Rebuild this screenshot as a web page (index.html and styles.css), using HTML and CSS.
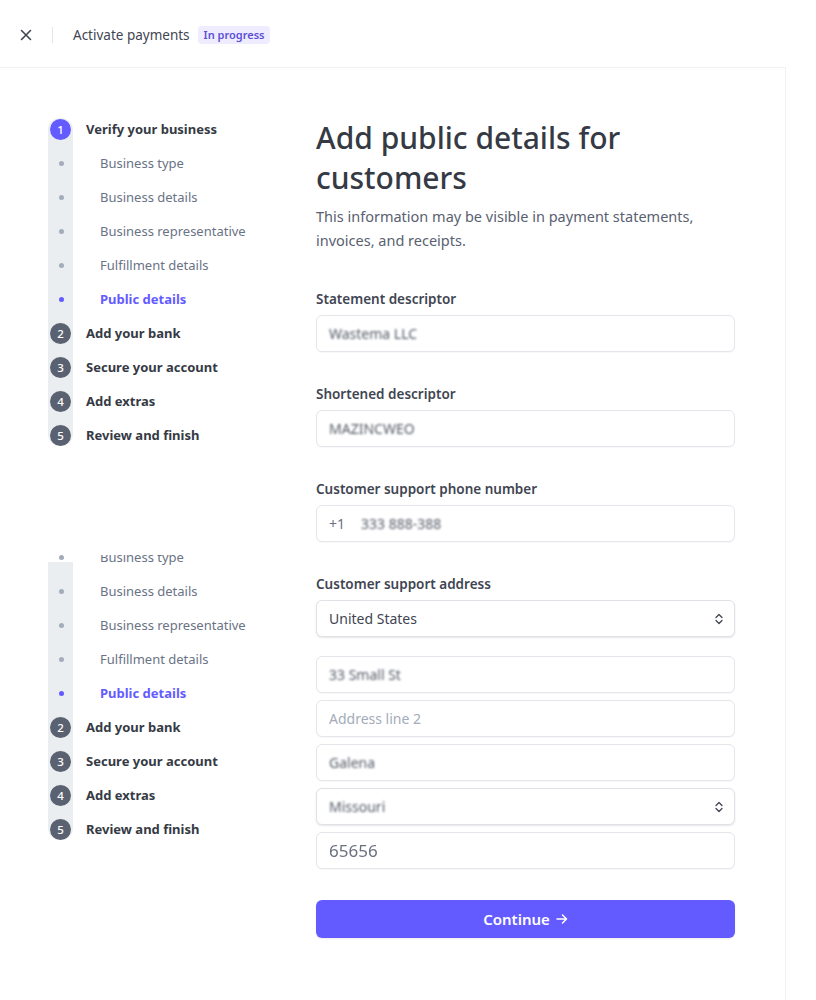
FILE: index.html
```html
<!DOCTYPE html>
<html lang="en">
<head>
<meta charset="utf-8">
<title>Activate payments</title>
<link rel="stylesheet" href="styles.css">
</head>
<body>
<header class="topbar">
  <button class="close" aria-label="Close">
    <svg width="12" height="12" viewBox="0 0 12 12"><path d="M1.5 1.5l9 9M10.5 1.5l-9 9" stroke="#414552" stroke-width="1.6" stroke-linecap="round"/></svg>
  </button>
  <span class="divider"></span>
  <span class="title">Activate payments</span>
  <span class="badge">In progress</span>
</header>
<div class="frame">
  <aside class="sidebar">
    <ol class="steps">
      <li class="step active"><span class="num">1</span><span class="label">Verify your business</span></li>
      <li class="sub"><span class="dot"></span><span class="label">Business type</span></li>
      <li class="sub"><span class="dot"></span><span class="label">Business details</span></li>
      <li class="sub"><span class="dot"></span><span class="label">Business representative</span></li>
      <li class="sub"><span class="dot"></span><span class="label">Fulfillment details</span></li>
      <li class="sub current"><span class="dot"></span><span class="label">Public details</span></li>
      <li class="step"><span class="num">2</span><span class="label">Add your bank</span></li>
      <li class="step"><span class="num">3</span><span class="label">Secure your account</span></li>
      <li class="step"><span class="num">4</span><span class="label">Add extras</span></li>
      <li class="step"><span class="num">5</span><span class="label">Review and finish</span></li>
    </ol>
    <div class="ghost">
      <ol class="steps steps-copy">
        <li class="sub"><span class="dot"></span><span class="label">Business type</span></li>
        <li class="sub"><span class="dot"></span><span class="label">Business details</span></li>
        <li class="sub"><span class="dot"></span><span class="label">Business representative</span></li>
        <li class="sub"><span class="dot"></span><span class="label">Fulfillment details</span></li>
        <li class="sub current"><span class="dot"></span><span class="label">Public details</span></li>
        <li class="step"><span class="num">2</span><span class="label">Add your bank</span></li>
        <li class="step"><span class="num">3</span><span class="label">Secure your account</span></li>
        <li class="step"><span class="num">4</span><span class="label">Add extras</span></li>
        <li class="step"><span class="num">5</span><span class="label">Review and finish</span></li>
      </ol>
    </div>
  </aside>
  <main class="main">
    <h1>Add public details for customers</h1>
    <p class="lead">This information may be visible in payment statements, invoices, and receipts.</p>

    <div class="field">
      <div class="flabel">Statement descriptor</div>
      <div class="input"><span class="blur">Wastema LLC</span></div>
    </div>
    <div class="field">
      <div class="flabel">Shortened descriptor</div>
      <div class="input"><span class="blur">MAZINCWEO</span></div>
    </div>
    <div class="field">
      <div class="flabel">Customer support phone number</div>
      <div class="input"><span class="prefix">+1</span><span class="blur">333 888-388</span></div>
    </div>
    <div class="field">
      <div class="flabel">Customer support address</div>
      <div class="input select"><span>United States</span>
        <svg class="chev" width="8" height="12" viewBox="0 0 8 12"><path d="M1 4.5L4 1.5L7 4.5M1 7.5L4 10.5L7 7.5" fill="none" stroke="#414552" stroke-width="1.3" stroke-linecap="round" stroke-linejoin="round"/></svg>
      </div>
      <div class="stack">
        <div class="input"><span class="blur">33 Small St</span></div>
        <div class="input"><span class="placeholder">Address line 2</span></div>
        <div class="input"><span class="blur">Galena</span></div>
        <div class="input select"><span class="blur">Missouri</span>
          <svg class="chev" width="8" height="12" viewBox="0 0 8 12"><path d="M1 4.5L4 1.5L7 4.5M1 7.5L4 10.5L7 7.5" fill="none" stroke="#414552" stroke-width="1.3" stroke-linecap="round" stroke-linejoin="round"/></svg>
        </div>
        <div class="input"><span class="blur zip">65656</span></div>
      </div>
    </div>
    <button class="continue">Continue
      <svg class="arrow" width="12" height="12" viewBox="0 0 12 12"><path d="M1 6h9.5M6.5 2l4 4-4 4" fill="none" stroke="#fff" stroke-width="1.5" stroke-linecap="round" stroke-linejoin="round"/></svg>
    </button>
  </main>
</div>
</body>
</html>
```

FILE: styles.css
```css
* { box-sizing: border-box; }
html, body { margin: 0; padding: 0; background: #fff; }
body {
  font-family: "Noto Sans", "Open Sans", "Liberation Sans", sans-serif;
  color: #353a44;
  width: 816px;
  height: 1000px;
  overflow: hidden;
}

.topbar {
  height: 67px;
  display: flex;
  align-items: center;
  padding-left: 20px;
  padding-top: 2px;
}
.close {
  width: 12px; height: 12px; padding: 0; border: 0; background: none;
  display: flex; align-items: center; justify-content: center;
}
.divider {
  width: 1px; height: 16px; background: #e3e5e9;
  margin-left: 20px; margin-right: 20px;
}
.title { font-size: 13.5px; color: #414552; }
.badge {
  margin-left: 8px;
  background: #efecff;
  color: #5b4fd6;
  font-size: 11px;
  font-weight: 600;
  padding: 1px 6px;
  border-radius: 4px;
  line-height: 16px;
}

.frame {
  width: 786px;
  height: 933px;
  border-top: 1px solid #f0f1f4;
  border-right: 1px solid #f0f1f4;
  display: flex;
}

.sidebar {
  width: 268px;
  margin-left: 48px;
  padding-top: 44px;
  display: flex;
  flex-direction: column;
}
.steps {
  list-style: none;
  margin: 0; padding: 0;
  position: relative;
}
.steps::before {
  content: "";
  position: absolute;
  left: 0; top: 6px; bottom: 6px;
  width: 25px;
  background: #ebeef1;
  border-radius: 12px;
}
.steps li {
  position: relative;
  height: 34px;
  display: flex;
  align-items: center;
  font-size: 13px;
}
.num {
  width: 21px; height: 21px;
  margin-left: 2px;
  border-radius: 50%;
  background: #5a6272;
  color: #fff;
  font-size: 11.5px;
  font-weight: 500;
  display: flex; align-items: center; justify-content: center;
}
.step.active .num { background: #635bff; }
.step .label {
  margin-left: 15px;
  font-weight: 700;
  color: #353a44;
}
.dot {
  width: 5px; height: 5px;
  margin-left: 11px;
  border-radius: 50%;
  background: #a3acba;
}
.sub .label {
  margin-left: 36px;
  color: #6a7385;
}
.sub.current .dot { background: #635bff; }
.sub.current .label { color: #635bff; font-weight: 700; }

.ghost {
  margin-top: 103px;
  height: 300px;
  overflow: hidden;
}
.steps-copy { margin-top: -15px; }
.steps-copy::before { top: 22px; border-top-left-radius: 0; border-top-right-radius: 0; }

.main {
  width: 419px;
  padding-top: 50px;
}
h1 {
  margin: 0;
  font-size: 30px;
  line-height: 40px;
  font-weight: 500;
  color: #353a44;
}
.lead {
  margin: 6px 0 0;
  font-size: 14.5px;
  line-height: 24px;
  color: #596171;
}
.field { margin-top: 37px; }
.field + .field { margin-top: 32px; }
.flabel {
  font-size: 13.5px;
  line-height: 20px;
  font-weight: 600;
  color: #414552;
  margin-bottom: 6px;
}
.input {
  height: 37px;
  border: 1px solid #e3e6eb;
  border-radius: 6px;
  display: flex;
  align-items: center;
  padding: 0 12px;
  font-size: 14px;
  color: #414552;
  background: #fff;
  box-shadow: 0 1px 1px rgba(0,0,0,0.03);
}
.select {
  justify-content: space-between;
  padding-right: 11px;
  box-shadow: 0 1px 2px rgba(0,0,0,0.1);
  border-color: #dfe2e7;
}
.stack {
  margin-top: 19px;
  display: flex;
  flex-direction: column;
  gap: 7px;
}
.blur { filter: blur(1.1px); color: #555b68; }
.zip { font-size: 17px; color: #6b7180; filter: blur(0.7px); }
.prefix { color: #687385; margin-right: 16px; }
.placeholder { color: #a3acba; }

.continue {
  margin-top: 31px;
  width: 419px;
  height: 38px;
  border: 0;
  border-radius: 6px;
  background: #635bff;
  color: #fff;
  font-family: inherit;
  font-size: 15px;
  font-weight: 600;
  box-shadow: 0 1px 2px rgba(0,0,0,0.08);
  display: flex;
  align-items: center;
  justify-content: center;
  gap: 6px;
}
```
